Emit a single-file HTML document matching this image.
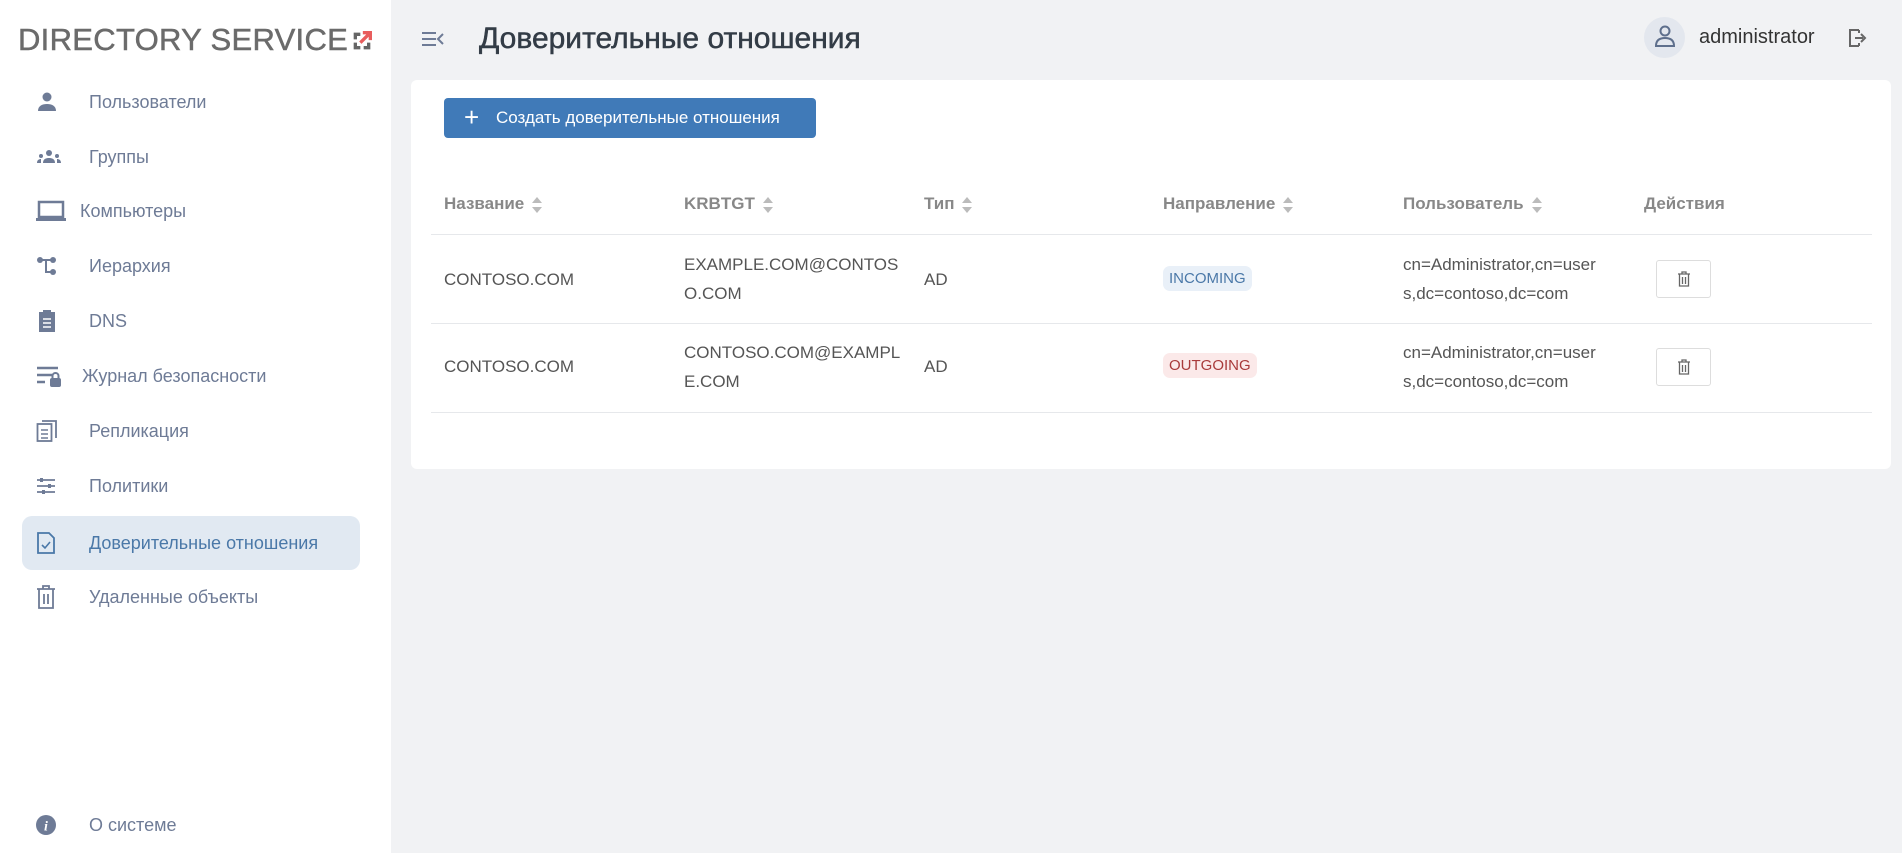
<!DOCTYPE html>
<html><head><meta charset="utf-8"><style>
*{box-sizing:border-box;margin:0;padding:0}
body{width:1902px;height:853px;background:#f1f2f4;font-family:"Liberation Sans",sans-serif;position:relative;overflow:hidden}
.side{position:absolute;left:0;top:0;width:391px;height:853px;background:#fff}
.logo{position:absolute;left:18px;top:22px;font-size:31px;color:#6b6b6b;white-space:nowrap;-webkit-text-stroke:0.5px #6b6b6b;letter-spacing:0.3px}
.nav{position:absolute;left:22px;width:338px;height:54px;border-radius:10px;color:#6e7b96;font-size:18px;display:flex;align-items:center}
.nav svg{position:absolute;left:14px;top:50%;transform:translateY(-50%)}
.nav span{position:absolute;left:67px}
.nav.act{background:#e1e9f2;color:#4a78a8}
.hdr{position:absolute;top:0;left:391px;right:0;height:78px}
.title{position:absolute;left:88px;top:22px;font-size:30px;color:#333c46;-webkit-text-stroke:0.5px #333c46}
.card{position:absolute;left:411px;top:80px;width:1480px;height:389px;background:#fff;border-radius:6px}
.btn{position:absolute;left:33px;top:18px;width:372px;height:40px;background:#407ab8;border-radius:4px;color:#fff;font-size:17px;display:flex;align-items:center;padding-left:52px}
.btn:before{content:"+";position:absolute;left:20px;top:4px;font-size:26px;font-weight:300}
.th{position:absolute;top:114px;font-size:17px;font-weight:bold;color:#888;white-space:nowrap}
.sort{display:inline-block;vertical-align:middle;margin-left:8px;width:10px;height:16px;position:relative}
.sort:before,.sort:after{content:"";position:absolute;left:0;border-left:5px solid transparent;border-right:5px solid transparent}
.sort:before{top:0;border-bottom:6px solid #bbb}.sort:after{bottom:0;border-top:6px solid #bbb}
.line{position:absolute;left:20px;width:1441px;height:1px;background:#e6e8eb}
.td{position:absolute;font-size:17px;color:#555;line-height:29px;white-space:nowrap}
.tag{position:absolute;font-size:15px;padding:4px 6px;border-radius:7px}
.del{position:absolute;left:1245px;width:55px;height:38px;border:1px solid #ddd;border-radius:3px;display:flex;align-items:center;justify-content:center}
</style></head><body>
<div class="side">
<div class="logo">DIRECTORY SERVICE<svg width="20" height="20" viewBox="0 0 24 24" style="margin-left:4px;vertical-align:-1px"><path d="M2 2h8v4H6v4H2zM2 14h4v4h4v4H2zM14 18h4v-4h4v8h-8z" fill="#666"/><path d="M10 14L22 2M13 2h9v9" stroke="#e85d5d" stroke-width="4" fill="none"/></svg></div>
<div class="nav" style="top:75px"><svg width="22" height="22" viewBox="0 0 22 22"><circle cx="11" cy="6" r="4.5" fill="#6e7b96"/><path d="M2 20c0-5 4-7 9-7s9 2 9 7z" fill="#6e7b96"/></svg><span>Пользователи</span></div>
<div class="nav" style="top:130px"><svg width="26" height="16" viewBox="0 0 26 16"><circle cx="13" cy="4" r="3" fill="#6e7b96"/><path d="M7 14c0-4 3-5 6-5s6 1 6 5z" fill="#6e7b96"/><circle cx="5" cy="7" r="2" fill="#6e7b96"/><circle cx="21" cy="7" r="2" fill="#6e7b96"/><path d="M1 14c0-3 2-4 4-4v4zM25 14c0-3-2-4-4-4v4z" fill="#6e7b96"/></svg><span>Группы</span></div>
<div class="nav" style="top:184px"><svg width="30" height="22" viewBox="0 0 30 22"><rect x="3" y="2" width="24" height="15" fill="none" stroke="#6e7b96" stroke-width="2.5"/><rect x="0" y="18" width="30" height="3" fill="#6e7b96"/></svg><span style="left:58px">Компьютеры</span></div>
<div class="nav" style="top:239px"><svg width="22" height="22" viewBox="0 0 22 22"><circle cx="4" cy="5" r="3" fill="#6e7b96"/><circle cx="17" cy="5" r="3" fill="#6e7b96"/><circle cx="17" cy="17" r="3" fill="#6e7b96"/><path d="M4 5h13M10 5v12h7" stroke="#6e7b96" stroke-width="2" fill="none"/></svg><span>Иерархия</span></div>
<div class="nav" style="top:294px"><svg width="22" height="24" viewBox="0 0 22 24"><rect x="3" y="3" width="16" height="20" fill="#6e7b96"/><rect x="7" y="1" width="8" height="4" fill="#6e7b96"/><path d="M7 10h8M7 14h8M7 18h8" stroke="#fff" stroke-width="1.5"/></svg><span>DNS</span></div>
<div class="nav" style="top:349px"><svg width="28" height="24" viewBox="0 0 28 24"><path d="M1 4h21M1 11h15M1 18h8" stroke="#6e7b96" stroke-width="2.5"/><rect x="14" y="14" width="11" height="9" rx="2" fill="#6e7b96"/><path d="M16.5 14v-2a3 3 0 0 1 6 0v2" stroke="#6e7b96" stroke-width="2" fill="none"/></svg><span style="left:60px">Журнал безопасности</span></div>
<div class="nav" style="top:404px"><svg width="22" height="24" viewBox="0 0 22 24"><rect x="1.5" y="5" width="14" height="17" fill="none" stroke="#6e7b96" stroke-width="1.8"/><path d="M6 2h14v17" fill="none" stroke="#6e7b96" stroke-width="1.8"/><path d="M5 11h7M5 15h7M5 19h7" stroke="#6e7b96" stroke-width="1.5"/></svg><span>Репликация</span></div>
<div class="nav" style="top:459px"><svg width="20" height="20" viewBox="0 0 20 20"><path d="M1 4h18M1 10h18M1 16h18" stroke="#6e7b96" stroke-width="1.8"/><rect x="4" y="2" width="3" height="4" fill="#6e7b96"/><rect x="12" y="8" width="3" height="4" fill="#6e7b96"/><rect x="6" y="14" width="3" height="4" fill="#6e7b96"/></svg><span>Политики</span></div>
<div class="nav act" style="top:516px"><svg width="20" height="24" viewBox="0 0 20 24"><path d="M2 2h11l5 5v15H2z" fill="none" stroke="#4a78a8" stroke-width="1.8"/><path d="M6 14l3 3 5-6" fill="none" stroke="#4a78a8" stroke-width="1.6"/></svg><span>Доверительные отношения</span></div>
<div class="nav" style="top:570px"><svg width="20" height="24" viewBox="0 0 20 24"><path d="M1 4h18M7 4V1h6v3M3 4v19h14V4M8 9v10M12 9v10" fill="none" stroke="#6e7b96" stroke-width="1.8"/></svg><span>Удаленные объекты</span></div>
<div class="nav" style="top:798px"><svg width="20" height="20" viewBox="0 0 20 20"><circle cx="10" cy="10" r="10" fill="#6e7b96"/><text x="10" y="15.5" font-size="14" font-style="italic" font-weight="bold" fill="#fff" text-anchor="middle" font-family="Liberation Serif">i</text></svg><span>О системе</span></div>
</div>
<div class="hdr">
<svg style="position:absolute;left:30px;top:30px" width="24" height="18" viewBox="0 0 24 18"><path d="M1 3h14M1 9h14M1 15h14M22 4l-5 5 5 5" stroke="#6e7b96" stroke-width="2" fill="none"/></svg>
<div class="title">Доверительные отношения</div>
<div style="position:absolute;left:1253px;top:17px;width:41px;height:41px;border-radius:50%;background:#e3e7ee"></div>
<svg style="position:absolute;left:1262px;top:24px" width="24" height="26" viewBox="0 0 24 26"><circle cx="12" cy="7" r="4.5" fill="none" stroke="#5e6f8c" stroke-width="2"/><path d="M3 22c0-6 4-8 9-8s9 2 9 8z" fill="none" stroke="#5e6f8c" stroke-width="2"/></svg>
<div style="position:absolute;left:1308px;top:26px;font-size:20px;color:#333">administrator</div>
<svg style="position:absolute;left:1456px;top:27px" width="22" height="22" viewBox="0 0 22 22"><path d="M12 3H3v16h9M12 3v3M12 19v-3" stroke="#666" stroke-width="2" fill="none"/><path d="M8 11h8M14 7l4 4-4 4" stroke="#666" stroke-width="2" fill="none"/></svg>
</div>
<div class="card">
<div class="btn">Создать доверительные отношения</div>
<div class="th" style="left:33px">Название<i class="sort"></i></div>
<div class="th" style="left:273px">KRBTGT<i class="sort"></i></div>
<div class="th" style="left:513px">Тип<i class="sort"></i></div>
<div class="th" style="left:752px">Направление<i class="sort"></i></div>
<div class="th" style="left:992px">Пользователь<i class="sort"></i></div>
<div class="th" style="left:1233px">Действия</div>
<div class="line" style="top:154px"></div>
<div class="td" style="left:33px;top:185px">CONTOSO.COM</div>
<div class="td" style="left:273px;top:170px">EXAMPLE.COM@CONTOS<br>O.COM</div>
<div class="td" style="left:513px;top:185px">AD</div>
<div class="tag" style="left:752px;top:186px;background:#e9f0f8;color:#4a78a8">INCOMING</div>
<div class="td" style="left:992px;top:170px">cn=Administrator,cn=user<br>s,dc=contoso,dc=com</div>
<div class="del" style="top:180px"><svg width="14" height="16" viewBox="0 0 14 16"><path d="M1 3h12M5 3V1h4v2M2.5 3v12h9V3M5.5 6v7M8.5 6v7" stroke="#666" stroke-width="1.3" fill="none"/></svg></div>
<div class="line" style="top:243px"></div>
<div class="td" style="left:33px;top:272px">CONTOSO.COM</div>
<div class="td" style="left:273px;top:258px">CONTOSO.COM@EXAMPL<br>E.COM</div>
<div class="td" style="left:513px;top:272px">AD</div>
<div class="tag" style="left:752px;top:273px;background:#fbe9e9;color:#a83a3a">OUTGOING</div>
<div class="td" style="left:992px;top:258px">cn=Administrator,cn=user<br>s,dc=contoso,dc=com</div>
<div class="del" style="top:268px"><svg width="14" height="16" viewBox="0 0 14 16"><path d="M1 3h12M5 3V1h4v2M2.5 3v12h9V3M5.5 6v7M8.5 6v7" stroke="#666" stroke-width="1.3" fill="none"/></svg></div>
<div class="line" style="top:332px"></div>
</div>
</body></html>
